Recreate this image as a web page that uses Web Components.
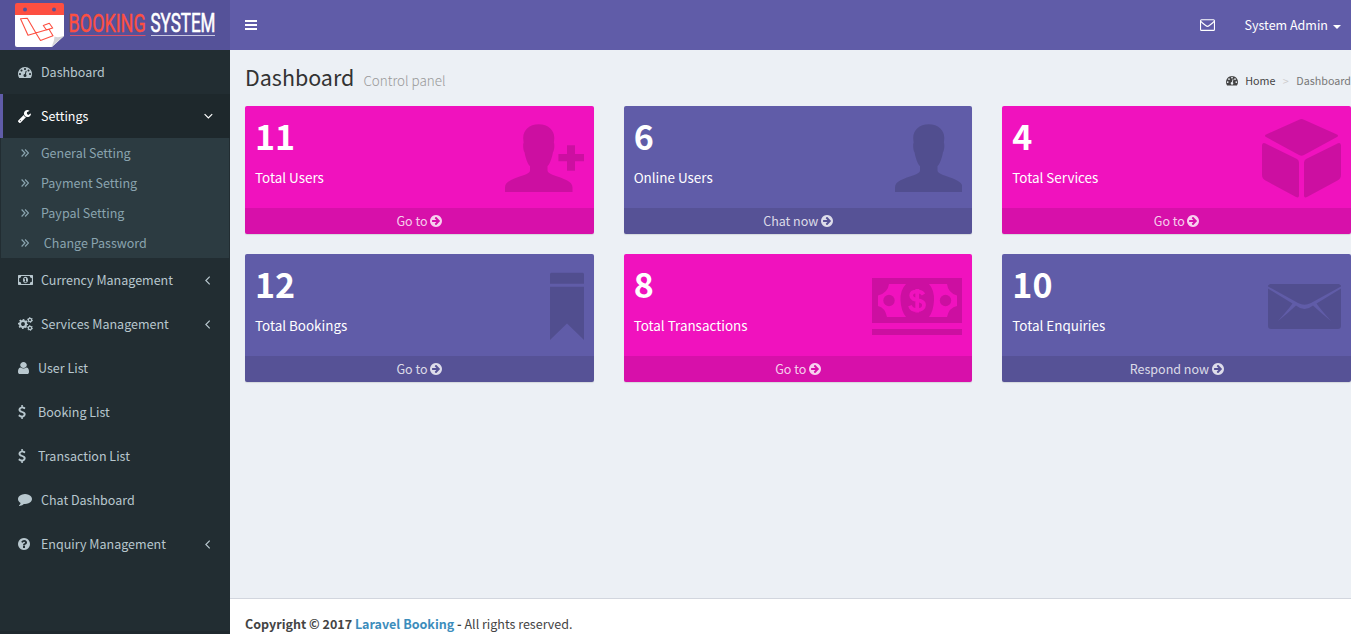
<!DOCTYPE html>
<html lang="en">
<head>
<meta charset="utf-8">
<title>Booking System | Dashboard</title>
<style>
html,body{margin:0;height:100%;overflow:hidden}
body{font:400 12.53px/20px "Noto Sans CJK SC","Noto Sans",sans-serif;color:#333;background:#ecf0f5}
</style>
</head>
<body>
<booking-app></booking-app>
<script>
const TACH='<path d="M384 1152q0-53-37.5-90.5t-90.5-37.5-90.5 37.5-37.5 90.5 37.5 90.5 90.5 37.5 90.5-37.5 37.5-90.5zm192-448q0-53-37.5-90.5t-90.5-37.5-90.5 37.5-37.5 90.5 37.5 90.5 90.5 37.5 90.5-37.5 37.5-90.5zm428 481l101-382q6-26-7.5-48.5t-38.5-29.5-48 6.5-30 39.5l-101 382q-60 5-107 43.5t-63 98.5q-20 77 20 146t117 89 146-20 89-117q16-60-6-117t-72-91zm660-33q0-53-37.5-90.5t-90.5-37.5-90.5 37.5-37.5 90.5 37.5 90.5 90.5 37.5 90.5-37.5 37.5-90.5zm-640-640q0-53-37.5-90.5t-90.5-37.5-90.5 37.5-37.5 90.5 37.5 90.5 90.5 37.5 90.5-37.5 37.5-90.5zm448 192q0-53-37.5-90.5t-90.5-37.5-90.5 37.5-37.5 90.5 37.5 90.5 90.5 37.5 90.5-37.5 37.5-90.5zm320 448q0 261-141 483-19 29-54 29h-1402q-35 0-54-29-141-221-141-483 0-182 71-348t191-286 286-191 348-71 348 71 286 191 191 286 71 348z"/>';
const PERSON='<path d="M33.7 0C24 0 18 6 18.200 14l.4 4.500c-.9 1.500-.4 8 .9 9.500C20.500 33 22 39 25 42v4c0 2-2 3.300-5 4.500C8 54.500 0 57 0 63v4.700h67.500V63c0-6-8.500-8.500-20-12.500-3-1.200-5-2.500-5-4.500v-4c3-3 4.500-9 5.500-14 1.300-1.500 1.800-8 .9-9.500l.4-4.500C49.500 6 43.500 0 33.700 0z"/>';
/* name: [viewBox, width, height, markup] */
const ICONS={
 dashboard:['0 256 1792 1408',14,11,TACH],
 crumb:['0 256 1792 1408',12,9.5,TACH],
 wrench:['85 128 1643 1643',13,13,'<path d="M448 1472q0-26-19-45t-45-19-45 19-19 45 19 45 45 19 45-19 19-45zm644-420l-682 682q-37 37-90 37-52 0-91-37l-106-108q-38-36-38-90 0-53 38-91l681-681q39 98 114.500 173.500t173.500 114.500zm634-435q0 39-23 106-47 134-164.500 217.500t-258.500 83.500q-185 0-316.500-131.500t-131.500-316.500 131.500-316.500 316.500-131.500q58 0 121.500 16.500t107.500 46.500q16 11 16 28t-16 28l-293 169v224l193 107q5-3 79-48.500t135.500-81 70.500-35.500q15 0 23.500 10t8.500 25z"/>'],
 banknote:['0 0 15 10',15,10,'<path fill-rule="evenodd" d="M.5 0h14l.5.500v9l-.5.500H.5L0 9.500v-9zM3.300 1.100A2.200 2.200 0 0 1 1.100 3.200v3.600a2.200 2.200 0 0 1 2.200 2.100h8.400a2.200 2.200 0 0 1 2.200-2.100V3.200a2.200 2.200 0 0 1-2.200-2.100zM7.500 1.800c1.600 0 2.500 1.500 2.500 3.200s-.9 3.200-2.500 3.200S5 6.700 5 5s.9-3.200 2.500-3.200zM7 2.900l-1 .9.500.600.500-.4v2.400h-.8v.800h2.700v-.8H8V2.900z"/>'],
 cogs:['0 0 15 14',15,14,'<g fill="none" stroke="currentColor"><circle cx="5" cy="7" r="3" stroke-width="2.100"/><circle cx="5" cy="7" r="4.300" stroke-width="1.500" stroke-dasharray="1.700 1.677" stroke-dashoffset=".85"/><circle cx="12" cy="3" r="1.700" stroke-width="1.300"/><circle cx="12" cy="3" r="2.500" stroke-width=".9" stroke-dasharray="1.300 1.318"/><circle cx="12" cy="11" r="1.700" stroke-width="1.300"/><circle cx="12" cy="11" r="2.500" stroke-width=".9" stroke-dasharray="1.300 1.318"/></g>'],
 user:['256 128 1280 1536',11,12,'<path d="M1536 1399q0 109-62.500 187t-150.500 78h-854q-88 0-150.500-78t-62.500-187q0-85 8.500-160.500t31.500-152 58.500-131 94-89 134.500-34.500q131 128 313 128t313-128q76 0 134.500 34.500t94 89 58.500 131 31.500 152 8.500 160.500zm-256-887q0 159-112.500 271.500t-271.500 112.500-271.500-112.500-112.500-271.500 112.500-271.500 271.500-112.500 271.500 112.500 112.500 271.500z"/>'],
 dollar:['384 0 1024 1792',8,14,'<path d="M1362 1185q0 153-99.500 263.500t-258.500 136.500v175q0 14-9 23t-23 9h-135q-13 0-22.500-9.500t-9.500-22.500v-175q-66-9-127.500-31t-101.500-44.500-74-48-46.500-37.500-17.500-18q-17-21-2-41l103-135q7-10 23-12 15-2 24 9l2 2q113 99 243 125 37 8 74 8 81 0 142.500-43t61.500-122q0-28-15-53t-33.500-42-58.500-37.500-66-32-80-32.500q-39-16-61.500-25t-61.500-26.500-62.500-31-56.500-35.500-53.500-42.500-43.500-49-35.500-58-21-66.500-8.500-78q0-138 98-242t255-134v-180q0-13 9.500-22.500t22.500-9.500h135q14 0 23 9t9 23v176q57 6 110.500 23t87 33.500 63.500 37.500 39 29 15 14q17 18 5 38l-81 146q-8 15-23 16-14 3-27-7-3-3-14.500-12t-39-26.500-58.500-32-74.500-26-85.500-11.500q-95 0-155 43t-60 111q0 26 8.500 48t29.500 41.500 39.500 33 56 31 60.500 27 70 27.500q53 20 81 31.500t76 35 75.500 42.500 62 50 53 63.500 31.500 76.500 13 94z"/>'],
 comment:['0 256 1792 1536',14,12,'<path d="M1792 896q0 174-120 321.500t-326 233-450 85.500q-70 0-145-8-198 175-460 242-49 14-114 22-17 2-30.500-9t-17.500-29v-1q-3-4-.5-12t2-10 4.500-9.500l6-9 7-8.500 8-9q7-8 31-34.500t34.500-38 31-39.500 32.500-51 27-59 26-76q-157-89-247.500-220t-90.500-281q0-130 71-248.500t191-204.500 286-136.500 348-50.500q244 0 450 85.500t326 233 120 321.500z"/>'],
 question:['128 128 1536 1536',12,12,'<path d="M1024 1376v-192q0-14-9-23t-23-9h-192q-14 0-23 9t-9 23v192q0 14 9 23t23 9h192q14 0 23-9t9-23zm256-672q0-88-55.500-163t-138.500-116-170-41q-243 0-371 213-15 24 8 42l132 100q7 6 19 6 16 0 25-12 53-68 86-92 34-24 86-24 48 0 85.500 26t37.500 59q0 38-20 61t-68 45q-63 28-115.500 86.500t-52.500 125.500v36q0 14 9 23t23 9h192q14 0 23-9t9-23q0-19 21.500-49.500t54.500-49.500q32-18 49-28.500t46-35 44.500-48 28-60.500 12.500-81zm384 192q0 209-103 385.500t-279.500 279.500-385.500 103-385.500-103-279.500-279.500-103-385.500 103-385.500 279.500-279.500 385.500-103 385.500 103 279.500 279.500 103 385.500z"/>'],
 go:['128 128 1536 1536',12,12,'<path d="M1413 896q0-27-18-45l-91-91-362-362q-18-18-45-18t-45 18l-91 91q-18 18-18 45t18 45l189 189h-502q-26 0-45 19t-19 45v128q0 26 19 45t45 19h502l-189 189q-19 19-19 45t19 45l91 91q18 18 45 18t45-18l362-362 91-91q18-18 18-45zm251 0q0 209-103 385.500t-279.500 279.500-385.500 103-385.500-103-279.500-279.500-103-385.500 103-385.500 279.500-279.500 385.500-103 385.500 103 279.500 279.500 103 385.500z"/>'],
 double:['0 0 8 8',8,8,'<path d="M.6.500 4 4 .6 7.500M4.100.500 7.500 4 4.100 7.500" fill="none" stroke="currentColor" stroke-width="1.200"/>'],
 left:['0 0 9 9',9,9,'<path d="M5.700 .7 1.900 4.500 5.700 8.300" fill="none" stroke="currentColor" stroke-width="1.200"/>'],
 down:['0 0 9 9',9,9,'<path d="M.6 2.200 4.400 6l3.800-3.800" fill="none" stroke="currentColor" stroke-width="1.200"/>'],
 bars:['0 0 12 10',12,10,'<path d="M0 0h12v2H0zM0 4h12v2H0zM0 8h12v2H0z"/>'],
 mail:['0 0 15 12',15,12,'<g fill="none" stroke="currentColor" stroke-width="1.100"><rect x=".55" y=".8" width="13.900" height="10.600" rx="1"/><path d="M.8 2.300c1.500 1.700 3.200 2.900 4.900 4.200.7.600 1.300.9 1.800.9s1.100-.3 1.800-.9c1.700-1.300 3.400-2.500 4.900-4.200"/></g>'],
 caret:['0 0 8 4',8,4,'<path d="M0 0h8L4 4z"/>'],
 'big-add':['0 0 79 79',79,79,'<g transform="translate(0 5.300)">'+PERSON+'<path d="M62 21h8v8.700h9V37h-9v9.500h-8V37h-8.600v-7.300H62z"/></g>'],
 'big-person':['0 0 67.500 79',67.5,79,'<g transform="translate(0 5.300)">'+PERSON+'</g>'],
 'big-cube':['0 0 79 79',79,79,'<path d="M37 .7q2.500-1.200 5 0L75 15.500q2 1.200 0 2.500L42 36q-2.500 1.300-5 0L4 18q-2-1.300 0-2.500zM0 26.500q0-3.500 3-2.200L35 40q2 1 2 3.500v33q0 3-3 1.600L3.500 61.500Q0 59.500 0 56zM79 26.500q0-3.500-3-2.200L44 40q-2 1-2 3.500v33q0 3 3 1.600l30.500-16.600Q79 59.500 79 56z"/>'],
 'big-bookmark':['0 0 34 79',34,79,'<path d="M1 5.700h32l1 1v10H0v-10zM0 19.700h34V73L17 56.500 0 73z"/>'],
 'big-cash':['0 0 90 79',90,79,'<path fill-rule="evenodd" d="M0 11h90v45H0zM17 17q-1 9-11 11.500v10.500q7 1.500 9 11h19q-5-6-5.500-16.500T34 17zM57 17q5.500 6 5 16.500T57 50h18q2-9.500 10-11V28.500Q76 26 75 17zM0 62h90v6H0z"/><circle cx="17" cy="33.500" r="5.700"/><circle cx="73.500" cy="33.500" r="5.700"/><path class="cut" d="M51.500 27.500c-1.500-2.700-4-3.200-6.500-3.200-3.500 0-5.800 1.500-5.800 4.200 0 6.500 12.800 2.800 12.800 9.500 0 3.300-3 5.200-6.700 5.200-3.500 0-6.300-1.200-7.300-4.600M45.200 22v23.500" fill="none" stroke-width="3.800"/>'],
 'big-mail':['0 0 73 79',73,79,'<path d="M2 17h69l2 1.500v1L43 36q-6.500 3.500-13 0L0 19.500v-1zM0 21.500 24.500 36.500Q20 43 10 54 20 46 28 38.500q8.500 7 17 0Q53 46 63 54 53 43 48.500 36.500L73 21.500V59q0 3-3 3H3q-3 0-3-3z"/>']
};
class Base extends HTMLElement{
 constructor(){super();this.attachShadow({mode:'open'})}
 connectedCallback(){this.shadowRoot.innerHTML=this.view()}
}
customElements.define('app-icon',class extends Base{
 view(){const [vb,w,h,m]=ICONS[this.getAttribute('name')];
 return `<style>:host{display:inline-block;flex:none;width:${w}px;height:${h}px}svg{display:block}.cut{stroke:var(--box,#f012be)}</style><svg viewBox="${vb}" width="${w}" height="${h}" fill="currentColor" preserveAspectRatio="none">${m}</svg>`}
});
customElements.define('brand-logo',class extends Base{
 view(){return `<style>:host{display:block;width:230px;height:50px;background:#555299;flex:none}svg{display:block}text{font-family:"Roboto",sans-serif;font-size:25.500px}</style>
<svg width="230" height="50" viewBox="0 0 230 50">
<path d="M15 14h49v22L52 47H17q-2 0-2-2z" fill="#fff"/><path d="M17 3h45q2 0 2 2v10H15V5q0-2 2-2z" fill="#fd4f41"/>
<circle cx="25" cy="9.500" r="2" fill="#555299"/><circle cx="54" cy="9.500" r="2" fill="#555299"/>
<path d="M64 36 51 47q3-4 3.500-10.500Q58 38 64 36z" fill="#d3d3d6"/>
<g fill="none" stroke="#fd4f41" stroke-width="1.100" stroke-linejoin="round"><path d="M36.500 34 27.300 18.200l-6.800.6L28 35.300 52.700 28M36 33.300l4.500 7.200L53 35.800 49 29.300M43.300 25.500l6-2.300 3.400 4.800-6.200 2z"/></g>
<text transform="translate(68.600 32) scale(.704 1)" fill="#fd4f41" stroke="#fd4f41" stroke-width=".4">BOOKING</text>
<text transform="translate(150.500 32) scale(.667 1)" fill="#fff" stroke="#fff" stroke-width=".6">SYSTEM</text>
<path d="M70 35h75.500v1H70z" fill="#d8506a"/><path d="M151 35h64v1h-64z" fill="#c9c8e2"/></svg>`}
});
customElements.define('top-bar',class extends Base{
 view(){return `<style>:host{display:flex;height:50px;color:#fff;background:#605ca8;flex:none}
nav{flex:1;display:flex;align-items:center;padding:0 10px 0 15px}.sp{flex:1}.u{margin:0 5px 0 29.500px;line-height:20px;position:relative;top:-.5px}app-icon[name=caret]{margin-top:3px}</style>
<brand-logo></brand-logo><nav><app-icon name="bars"></app-icon><span class="sp"></span><app-icon name="mail"></app-icon><span class="u">System Admin</span><app-icon name="caret"></app-icon></nav>`}
});
customElements.define('nav-item',class extends Base{
 view(){const on=this.hasAttribute('active'),a=this.getAttribute('arrow');
 return `<style>:host{display:block;color:${on?'#fff':'#b8c7ce'}}
.r{display:flex;align-items:center;height:44px;box-sizing:border-box;border-left:3px solid ${on?'#605ca8':'transparent'};background:${on?'#1e282c':'none'};padding:0 17px 0 15px}
.i{width:${this.getAttribute('gap')||23}px;display:flex;flex:none}.t{flex:1;position:relative;top:-.5px}</style>
<div class="r"><span class="i"><app-icon name="${this.getAttribute('icon')}"></app-icon></span><span class="t"><slot></slot></span>${a?`<app-icon name="${a}"></app-icon>`:''}</div>`}
});
customElements.define('sub-item',class extends Base{
 view(){return `<style>:host{display:flex;align-items:center;height:30px;padding-left:20px;color:#8aa4af}.i{width:20px;display:flex;flex:none}.t{position:relative;top:-.5px}</style><span class="i"><app-icon name="double"></app-icon></span><span class="t"><slot></slot></span>`}
});
customElements.define('side-bar',class extends Base{
 view(){return `<style>:host{display:block;width:230px;flex:none;background:#222d32;box-sizing:border-box;border-bottom:3px solid #1f292e}.sub{margin:0 1px;background:#2c3b41}</style>
<nav-item icon="dashboard">Dashboard</nav-item><nav-item icon="wrench" active arrow="down">Settings</nav-item>
<div class="sub"><sub-item>General Setting</sub-item><sub-item>Payment Setting</sub-item><sub-item>Paypal Setting</sub-item><sub-item>&nbsp;Change Password</sub-item></div>
<nav-item icon="banknote" arrow="left">Currency Management</nav-item><nav-item icon="cogs" arrow="left">Services Management</nav-item>
<nav-item icon="user" gap="20">User List</nav-item><nav-item icon="dollar" gap="20">Booking List</nav-item><nav-item icon="dollar" gap="20">Transaction List</nav-item>
<nav-item icon="comment">Chat Dashboard</nav-item><nav-item icon="question" arrow="left">Enquiry Management</nav-item>`}
});
customElements.define('stat-box',class extends Base{
 view(){const g=n=>this.getAttribute(n);
 return `<style>:host{display:flex;flex-direction:column;height:128px;color:#fff;--box:${g('tone')==='pink'?'#f012be':'#605ca8'};background:var(--box);border-radius:2px;box-shadow:0 1px 1px rgba(0,0,0,.1);overflow:hidden}
.m{flex:1;display:flex;justify-content:space-between;padding:9px 10px 0}
.n{font-weight:700;font-size:34px;line-height:42px}.l{font-size:13.430px;line-height:22px;margin-top:9px}
.pic{color:rgba(0,0,0,.15);margin-top:4px;height:79px}
.f{height:26px;display:flex;align-items:center;justify-content:center;gap:2.500px;background:rgba(0,0,0,.1);color:rgba(255,255,255,.8)}.f span{position:relative;top:-.5px}</style>
<div class="m"><div><div class="n">${g('value')}</div><div class="l"><slot></slot></div></div><app-icon class="pic" name="${g('icon')}"></app-icon></div>
<div class="f"><span>${g('action')}</span><app-icon name="go"></app-icon></div>`}
});
customElements.define('page-head',class extends Base{
 view(){return `<style>:host{display:flex;justify-content:space-between;height:56px}
h1{margin:14px 0 0;font-weight:400;font-size:21.480px;line-height:26px;color:#333}small{font-size:13.430px;font-weight:300;color:#999;margin-left:9px}
.c{display:flex;align-items:center;height:20px;margin-top:21px;font-size:10.740px;color:#444}.h{margin:0 7.500px 0 7px}.s{color:#ccc;margin-right:7.500px}.d{color:#777}</style>
<h1>Dashboard<small>Control panel</small></h1><div class="c"><app-icon name="crumb"></app-icon><span class="h">Home</span><span class="s">&gt;</span><span class="d">Dashboard</span></div>`}
});
customElements.define('page-foot',class extends Base{
 view(){return `<style>:host{display:block;height:36px;box-sizing:border-box;background:#fff;border-top:1px solid #d2d6de;padding:15px 15px 0;color:#444;overflow:hidden;white-space:nowrap}b{font-weight:700}i{font-style:normal;color:#3c8dbc}</style>
<b>Copyright © 2017 <i>Laravel Booking</i> -</b> All rights reserved.`}
});
customElements.define('booking-app',class extends Base{
 view(){return `<style>:host{display:flex;flex-direction:column;height:100vh}.b{flex:1;display:flex;min-height:0}main{flex:1;display:flex;flex-direction:column;min-width:0}
.c{flex:1;padding-left:15px}.g{display:grid;grid-template-columns:repeat(3,1fr);gap:20px 30px}</style>
<top-bar></top-bar><div class="b"><side-bar></side-bar><main><div class="c"><page-head></page-head><div class="g">
<stat-box tone="pink" value="11" icon="big-add" action="Go to">Total Users</stat-box>
<stat-box tone="purple" value="6" icon="big-person" action="Chat now">Online Users</stat-box>
<stat-box tone="pink" value="4" icon="big-cube" action="Go to">Total Services</stat-box>
<stat-box tone="purple" value="12" icon="big-bookmark" action="Go to">Total Bookings</stat-box>
<stat-box tone="pink" value="8" icon="big-cash" action="Go to">Total Transactions</stat-box>
<stat-box tone="purple" value="10" icon="big-mail" action="Respond now">Total Enquiries</stat-box>
</div></div><page-foot></page-foot></main></div>`}
});
</script>
</body>
</html>
